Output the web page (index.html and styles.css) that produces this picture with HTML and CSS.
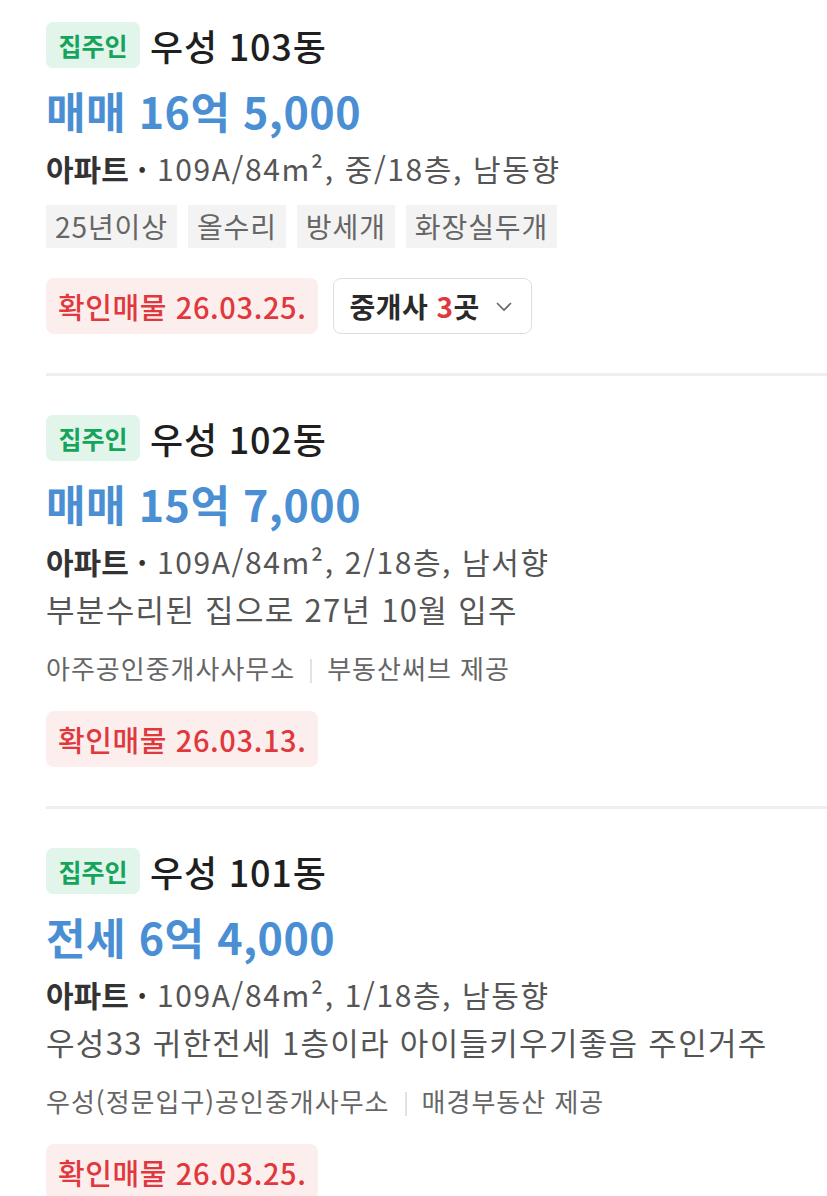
FILE: index.html
```html
<!DOCTYPE html>
<html lang="ko">
<head>
    <meta charset="UTF-8">
    <meta name="viewport" content="width=device-width, initial-scale=1.0">
    <title>매물 목록</title>
    <link rel="stylesheet" href="styles.css">
</head>
<body>
    <ul class="listing">
        <!-- 우성 103동 -->
        <li class="item">
            <div class="head">
                <span class="owner">집주인</span>
                <span class="title">우성 103동</span>
            </div>
            <div class="price">매매 16억 5,000</div>
            <div class="info"><b>아파트 ·</b> 109A/84m², 중/18층, 남동향</div>
            <div class="tags">
                <span class="tag">25년이상</span>
                <span class="tag">올수리</span>
                <span class="tag">방세개</span>
                <span class="tag">화장실두개</span>
            </div>
            <div class="status">
                <span class="confirm">확인매물 26.03.25.</span>
                <button class="agents">
                    <span>중개사 <em>3</em>곳</span>
                    <svg width="18" height="12" viewBox="0 0 18 12"><path d="M2 3l7 7 7-7" fill="none" stroke="#666" stroke-width="1.6"/></svg>
                </button>
            </div>
        </li>

        <!-- 우성 102동 -->
        <li class="item">
            <div class="head">
                <span class="owner">집주인</span>
                <span class="title">우성 102동</span>
            </div>
            <div class="price">매매 15억 7,000</div>
            <div class="info"><b>아파트 ·</b> 109A/84m², 2/18층, 남서향</div>
            <div class="desc">부분수리된 집으로 27년 10월 입주</div>
            <div class="agency">아주공인중개사사무소<i class="bar"></i>부동산써브 제공</div>
            <div class="status status-tight">
                <span class="confirm">확인매물 26.03.13.</span>
            </div>
        </li>

        <!-- 우성 101동 -->
        <li class="item">
            <div class="head">
                <span class="owner">집주인</span>
                <span class="title">우성 101동</span>
            </div>
            <div class="price">전세 6억 4,000</div>
            <div class="info"><b>아파트 ·</b> 109A/84m², 1/18층, 남동향</div>
            <div class="desc">우성33 귀한전세 1층이라 아이들키우기좋음 주인거주</div>
            <div class="agency">우성(정문입구)공인중개사무소<i class="bar"></i>매경부동산 제공</div>
            <div class="status status-tight">
                <span class="confirm">확인매물 26.03.25.</span>
            </div>
        </li>
    </ul>
</body>
</html>
```

FILE: styles.css
```css
* {
    margin: 0;
    padding: 0;
    box-sizing: border-box;
}

body {
    background: #fff;
    color: #222;
    font-family: "Noto Sans CJK KR", "Noto Sans", sans-serif;
    overflow: hidden;
}

.listing {
    list-style: none;
    margin-left: 46px;
}

.item {
    padding: 39px 0 39px 0;
    border-bottom: 3px solid #eeeeee;
}

.item:first-child {
    padding-top: 22px;
}

.head {
    display: flex;
    align-items: center;
    gap: 10px;
    height: 46px;
}

.owner {
    display: inline-flex;
    align-items: center;
    justify-content: center;
    width: 94px;
    height: 46px;
    border-radius: 7px;
    background: #e1f5ea;
    color: #16a35b;
    font-size: 25px;
    font-weight: 700;
}

.title {
    font-size: 36px;
    font-weight: 500;
    color: #1f1f1f;
    letter-spacing: 0.8px;
}

.price {
    margin-top: 16px;
    font-size: 43px;
    line-height: 52px;
    font-weight: 700;
    color: #4a8fd4;
    letter-spacing: 0.5px;
}

.info {
    margin-top: 8px;
    font-size: 30px;
    line-height: 48px;
    color: #555;
    letter-spacing: 1.6px;
}

.info b {
    color: #333;
    font-weight: 700;
    letter-spacing: 0;
}

.desc {
    font-size: 31px;
    line-height: 48px;
    color: #555;
    letter-spacing: 1.3px;
}

.tags {
    display: flex;
    gap: 11px;
    margin-top: 13px;
}

.tag {
    height: 43px;
    line-height: 43px;
    padding: 0 9px;
    background: #f3f3f3;
    color: #666;
    font-size: 28px;
    letter-spacing: 0.9px;
}

.agency {
    margin-top: 15px;
    display: flex;
    align-items: center;
    font-size: 26px;
    line-height: 40px;
    color: #666;
    letter-spacing: 1px;
}

.bar {
    width: 2px;
    height: 24px;
    margin: 6px 15px 0 15px;
    background: #e2e2e2;
}

.status {
    display: flex;
    gap: 15px;
    margin-top: 30px;
}

.status-tight {
    margin-top: 23px;
}

.confirm {
    display: inline-flex;
    align-items: center;
    height: 56px;
    padding: 0 12px;
    border-radius: 8px;
    background: #fdeeee;
    color: #e0383c;
    font-size: 29px;
    font-weight: 500;
    letter-spacing: 0.6px;
}

.agents {
    display: inline-flex;
    align-items: center;
    height: 56px;
    padding: 0 18px 0 15px;
    border: 1.5px solid #dedede;
    border-radius: 8px;
    background: #fff;
    color: #2a2a2a;
    font-family: inherit;
    font-size: 28px;
    font-weight: 700;
    letter-spacing: 0.5px;
}

.agents em {
    font-style: normal;
    color: #e0383c;
}

.agents svg {
    margin-left: 15px;
}
```
